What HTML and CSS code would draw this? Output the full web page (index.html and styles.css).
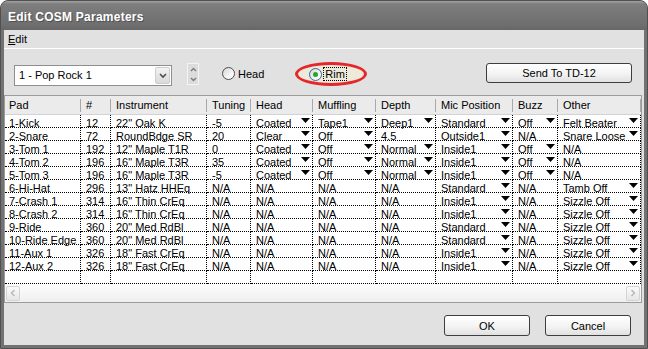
FILE: index.html
```html
<!doctype html>
<html>
<head>
<meta charset="utf-8">
<title>Edit COSM Parameters</title>
<link rel="stylesheet" href="styles.css">
</head>
<body>
<div class="window">
	<div class="titlebar">Edit COSM Parameters</div>
	<div class="client">
		<div class="menubar"><span class="menu"><u>E</u>dit</span></div>
		<div class="toolbar">
			<div class="combo">
				<span class="combo-text">1 - Pop Rock 1</span>
				<span class="combo-btn"><svg width="8" height="6" viewBox="0 0 8 6"><polyline points="1,1 4,4 7,1" fill="none" stroke="#4f4f4f" stroke-width="1.6"/></svg></span>
			</div>
			<div class="spin">
				<span class="spin-half"><svg width="7" height="5" viewBox="0 0 7 5"><polyline points="1,4 3.5,1.5 6,4" fill="none" stroke="#7a7a7a" stroke-width="1.4"/></svg></span>
				<span class="spin-half"><svg width="7" height="5" viewBox="0 0 7 5"><polyline points="1,1 3.5,3.5 6,1" fill="none" stroke="#7a7a7a" stroke-width="1.4"/></svg></span>
			</div>
			<label class="radio head-radio"><span class="dot"></span>Head</label>
			<label class="radio rim"><span class="dot on"></span><span class="focus">Rim</span></label>
			<button class="btn send">Send To TD-12</button>
		</div>
		<div class="list">
			<div class="row head">
				<span>Pad</span><span>#</span><span>Instrument</span><span>Tuning</span><span>Head</span><span>Muffling</span><span>Depth</span><span>Mic Position</span><span>Buzz</span><span>Other</span>
			</div>
			<div class="row"><span>1-Kick</span><span>12</span><span>22" Oak K</span><span>-5</span><span class="dd">Coated</span><span class="dd">Tape1</span><span class="dd">Deep1</span><span class="dd">Standard</span><span class="dd">Off</span><span class="dd">Felt Beater</span></div>
			<div class="row"><span>2-Snare</span><span>72</span><span>RoundBdge SR</span><span>20</span><span class="dd">Clear</span><span class="dd">Off</span><span>4.5</span><span class="dd">Outside1</span><span>N/A</span><span class="dd">Snare Loose</span></div>
			<div class="row"><span>3-Tom 1</span><span>192</span><span>12" Maple T1R</span><span>0</span><span class="dd">Coated</span><span class="dd">Off</span><span class="dd">Normal</span><span class="dd">Inside1</span><span class="dd">Off</span><span>N/A</span></div>
			<div class="row"><span>4-Tom 2</span><span>196</span><span>16" Maple T3R</span><span>35</span><span class="dd">Coated</span><span class="dd">Off</span><span class="dd">Normal</span><span class="dd">Inside1</span><span class="dd">Off</span><span>N/A</span></div>
			<div class="row"><span>5-Tom 3</span><span>196</span><span>16" Maple T3R</span><span>-5</span><span class="dd">Coated</span><span class="dd">Off</span><span class="dd">Normal</span><span class="dd">Inside1</span><span class="dd">Off</span><span>N/A</span></div>
			<div class="row"><span>6-Hi-Hat</span><span>296</span><span>13" Hatz HHEq</span><span>N/A</span><span>N/A</span><span>N/A</span><span>N/A</span><span class="dd">Standard</span><span>N/A</span><span class="dd">Tamb Off</span></div>
			<div class="row"><span>7-Crash 1</span><span>314</span><span>16" Thin CrEq</span><span>N/A</span><span>N/A</span><span>N/A</span><span>N/A</span><span class="dd">Inside1</span><span>N/A</span><span class="dd">Sizzle Off</span></div>
			<div class="row"><span>8-Crash 2</span><span>314</span><span>16" Thin CrEq</span><span>N/A</span><span>N/A</span><span>N/A</span><span>N/A</span><span class="dd">Inside1</span><span>N/A</span><span class="dd">Sizzle Off</span></div>
			<div class="row"><span>9-Ride</span><span>360</span><span>20" Med RdBl</span><span>N/A</span><span>N/A</span><span>N/A</span><span>N/A</span><span class="dd">Standard</span><span>N/A</span><span class="dd">Sizzle Off</span></div>
			<div class="row"><span>10-Ride Edge</span><span>360</span><span>20" Med RdBl</span><span>N/A</span><span>N/A</span><span>N/A</span><span>N/A</span><span class="dd">Standard</span><span>N/A</span><span class="dd">Sizzle Off</span></div>
			<div class="row"><span>11-Aux 1</span><span>326</span><span>18" Fast CrEq</span><span>N/A</span><span>N/A</span><span>N/A</span><span>N/A</span><span class="dd">Inside1</span><span>N/A</span><span class="dd">Sizzle Off</span></div>
			<div class="row"><span>12-Aux 2</span><span>326</span><span>18" Fast CrEq</span><span>N/A</span><span>N/A</span><span>N/A</span><span>N/A</span><span class="dd">Inside1</span><span>N/A</span><span class="dd">Sizzle Off</span></div>
			<div class="row"><span></span><span></span><span></span><span></span><span></span><span></span><span></span><span></span><span></span><span></span></div>
			<div class="hscroll">
				<span class="arrow"><svg width="6" height="8" viewBox="0 0 6 8"><polyline points="4.5,1 1.5,4 4.5,7" fill="none" stroke="#b9b9b9" stroke-width="1.5"/></svg></span>
				<span class="arrow"><svg width="6" height="8" viewBox="0 0 6 8"><polyline points="1.5,1 4.5,4 1.5,7" fill="none" stroke="#b9b9b9" stroke-width="1.5"/></svg></span>
			</div>
		</div>
		<div class="footer">
			<button class="btn">OK</button>
			<button class="btn">Cancel</button>
		</div>
	</div>
</div>
</body>
</html>
```

FILE: styles.css
```css
body{
	margin: 0;
	background: #fff;
	font-family: "Liberation Sans", Arial, sans-serif;
	font-size: 11px;
	color: #000;
}
.window{
	width: 648px;
	height: 349px;
	box-sizing: border-box;
	background: #727272;
	border: 1px solid #505050;
	border-radius: 8px 8px 0 0;
	display: flex;
	flex-direction: column;
}
.titlebar{
	flex: none;
	height: 29px;
	box-sizing: border-box;
	padding: 2px 0 0 7px;
	display: flex;
	align-items: center;
	border-radius: 7px 7px 0 0;
	background: linear-gradient(#a2a2a2, #7e7e7e 3px, #777 12px, #6e6e6e 24px, #676767);
	color: #fff;
	font-size: 12px;
	font-weight: bold;
	letter-spacing: 0.25px;
	text-shadow: 1px 1px 0 #505050;
}
.client{
	flex: 1;
	margin: 0 3px 3px;
	background: #e1e1e1;
	display: flex;
	flex-direction: column;
}
.menubar{
	flex: none;
	height: 18px;
	line-height: 18px;
	padding-left: 4px;
	border-bottom: 1px solid #fff;
}
.toolbar{
	flex: none;
	height: 46px;
	display: flex;
	align-items: flex-start;
}
.combo{
	width: 158px;
	height: 21px;
	box-sizing: border-box;
	margin: 16px 0 0 10px;
	border: 1px solid #8e8e8e;
	background: #fff;
	display: flex;
}
.combo-text{
	flex: 1;
	padding-left: 4px;
	line-height: 19px;
}
.combo-btn{
	width: 15px;
	margin: 1px;
	box-sizing: border-box;
	border: 1px solid #cdcdcd;
	border-radius: 2px;
	background: linear-gradient(#f4f4f4, #d9d9d9);
	display: flex;
	align-items: center;
	justify-content: center;
}
.spin{
	width: 12px;
	height: 22px;
	box-sizing: border-box;
	margin: 14px 0 0 15px;
	border: 1px solid #f4f4f4;
	background: #dcdcdc;
	display: flex;
	flex-direction: column;
}
.spin-half{
	flex: 1;
	display: flex;
	align-items: center;
	justify-content: center;
}
.radio{
	display: flex;
	align-items: center;
	gap: 3px;
}
.head-radio{
	margin: 18px 0 0 23px;
	height: 13px;
}
.dot{
	width: 13px;
	height: 13px;
	box-sizing: border-box;
	border: 1px solid #4d4d4d;
	border-radius: 50%;
	background: linear-gradient(135deg, #d4d4d4, #fafafa 70%);
	display: flex;
	align-items: center;
	justify-content: center;
}
.rim{
	width: 72px;
	height: 24px;
	box-sizing: border-box;
	margin: 13px 0 0 31px;
	padding-left: 11px;
	gap: 1px;
	border: 3px solid #e5262b;
	border-radius: 50%;
	background: #eeead9;
}
.dot.on{
	border-color: #3a64a4;
}
.dot.on::after{
	content: "";
	width: 5px;
	height: 5px;
	border-radius: 50%;
	background: #22a92a;
}
.focus{
	border: 1px dotted #000;
	padding: 0 1px;
	line-height: 12px;
}
.btn{
	width: 86px;
	height: 21px;
	padding: 0;
	border: 1px solid #3e3e3e;
	border-radius: 3px;
	background: linear-gradient(#fff, #f3f3f3 55%, #e1e1e1);
	font-family: "Liberation Sans", Arial, sans-serif;
	font-size: 11px;
	color: #000;
}
.send{
	width: 146px;
	height: 20px;
	margin: 14px 12px 0 auto;
}
.list{
	flex: none;
	height: 208px;
	box-sizing: border-box;
	margin-right: 2px;
	border: 1px solid #9c9c9c;
	background: #fff;
	display: flex;
	flex-direction: column;
}
.row{
	display: grid;
	grid-template-columns: 76px 30px 96px 44px 62px 63px 60px 77px 45px 83px;
	height: 13px;
}
.row span{
	box-sizing: border-box;
	height: 13px;
	padding: 2px 0 0 5px;
	border-right: 1px dotted #000;
	border-bottom: 1px dotted #000;
	line-height: 12px;
	white-space: nowrap;
	display: flex;
	align-items: flex-start;
}
.row span:first-child{
	padding-left: 4px;
}
.row .dd::after{
	content: "";
	width: 9px;
	height: 5px;
	margin: 1px 2px 0 auto;
	background: #000;
	clip-path: polygon(0 0, 100% 0, 50% 100%);
}
.row.head{
	height: 19px;
	box-sizing: border-box;
	padding: 3px 0 2px;
	background: #ebebeb;
	border-bottom: 1px solid #d2d2d2;
}
.row.head span{
	height: 13px;
	padding-top: 0;
	line-height: 13px;
	border-bottom: 0;
	border-right: 1px solid #a9a9a9;
}
.hscroll{
	flex: none;
	height: 18px;
	margin-top: auto;
	padding: 0 1px;
	display: flex;
	align-items: center;
	justify-content: space-between;
	background: linear-gradient(#fdfdfd, #efefef);
}
.arrow{
	width: 14px;
	height: 15px;
	box-sizing: border-box;
	border: 1px solid #d4d4d4;
	border-radius: 2px;
	background: linear-gradient(#fbfbfb, #e6e6e6);
	display: flex;
	align-items: center;
	justify-content: center;
}
.footer{
	flex: 1;
	display: flex;
	justify-content: flex-end;
	align-items: flex-start;
	gap: 15px;
	padding: 12px 13px 0 0;
}
```
